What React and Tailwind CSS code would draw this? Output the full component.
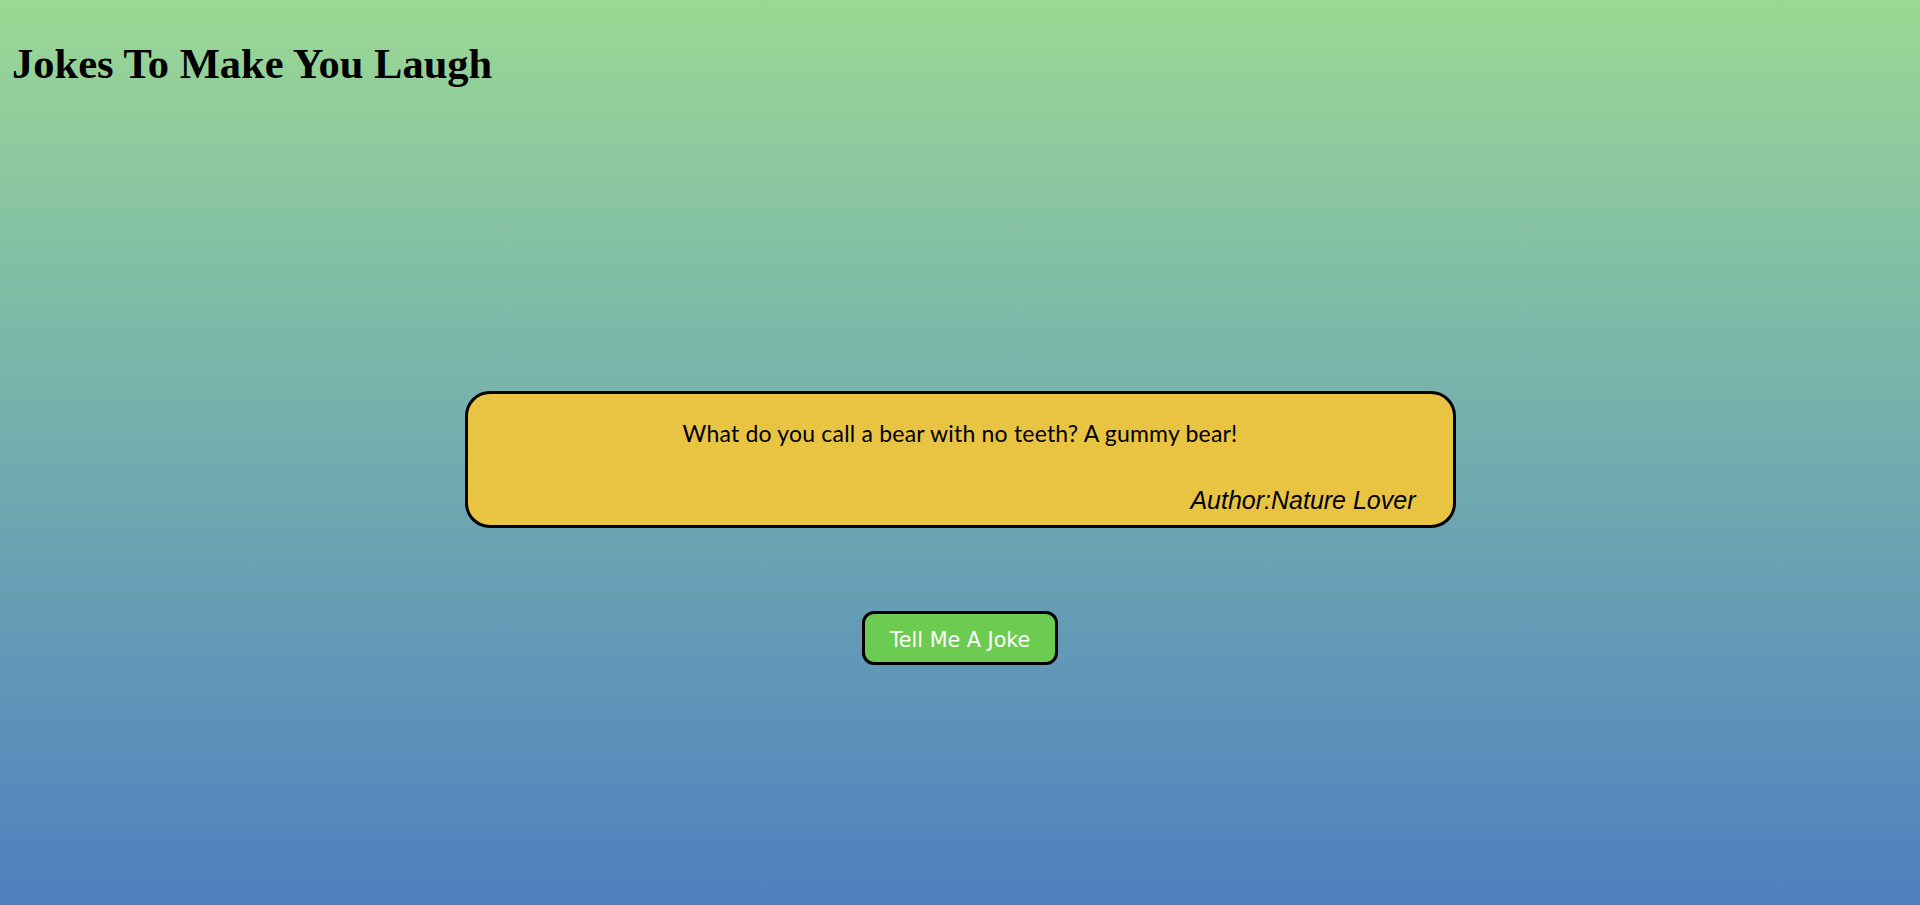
export default function App() {
  return (
    <div className="h-[905px] w-full bg-gradient-to-b from-[#9bd893] to-[#4f7fbf] overflow-hidden">
      {/* Heading */}
      <h1 className="mt-[42px] pl-[12px] text-[42.5px] leading-[43px] font-bold text-black font-['Liberation_Serif',serif]">
        Jokes To Make You Laugh
      </h1>

      {/* Joke card */}
      <div className="mx-auto mt-[306px] w-[991px] h-[137px] rounded-[25px] border-[3px] border-black bg-[#e9c443] flex flex-col">
        <p className="pt-[26px] text-center text-[23px] leading-[26px] tracking-[0.2px] text-black font-['Lato',sans-serif]">
          What do you call a bear with no teeth? A gummy bear!
        </p>
        <p className="mt-auto pb-[11px] pr-[37px] text-right text-[25px] leading-[28px] italic text-black font-['Liberation_Sans',sans-serif]">
          Author:Nature Lover
        </p>
      </div>

      {/* Action */}
      <div className="mt-[83px] flex justify-center">
        <button className="w-[196px] h-[54px] pt-[5px] rounded-[12px] border-[3px] border-black bg-[#6ccc52] text-white text-[20.7px] font-['DejaVu_Sans',sans-serif]">
          Tell Me A Joke
        </button>
      </div>
    </div>
  );
}
